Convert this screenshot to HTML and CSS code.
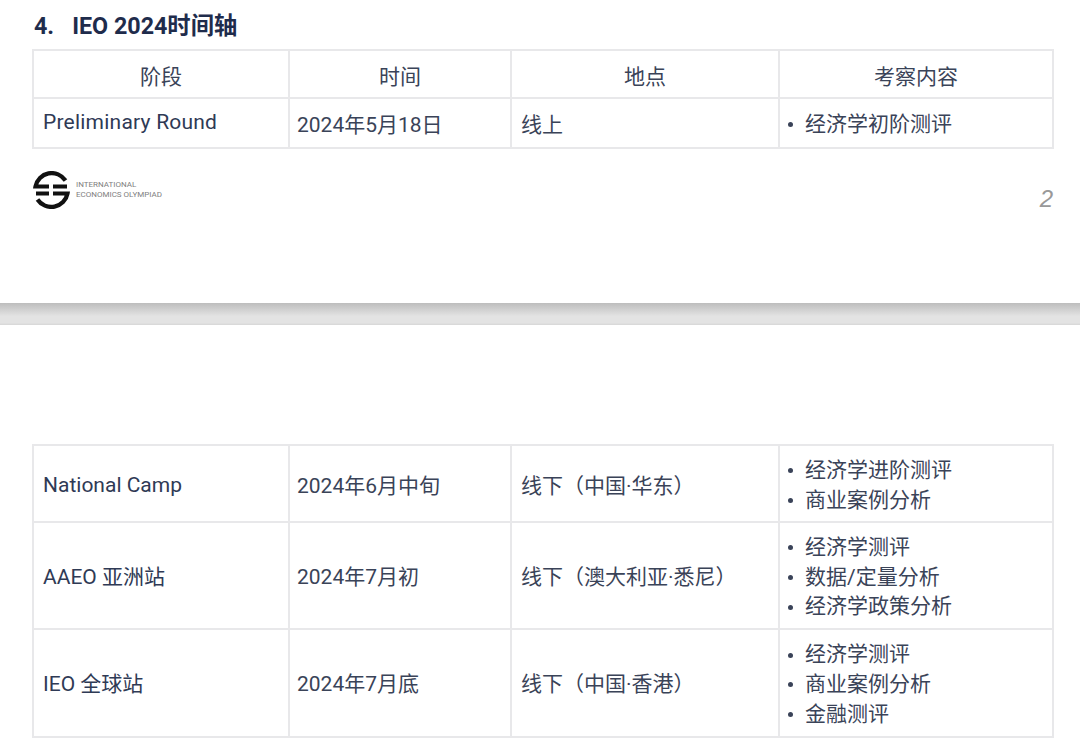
FILE: index.html
```html
<!DOCTYPE html>
<html lang="zh">
<head>
<meta charset="utf-8">
<title>IEO 2024时间轴</title>
<link rel="stylesheet" href="styles.css">
</head>
<body>
<section class="page page-top">
  <h2 class="heading"><span class="heading-num">4.</span><span>IEO 2024时间轴</span></h2>
  <table class="grid">
    <colgroup><col class="c1"><col class="c2"><col class="c3"><col class="c4"></colgroup>
    <tr class="row-head"><th>阶段</th><th>时间</th><th>地点</th><th>考察内容</th></tr>
    <tr class="row-one">
      <td class="name name-first">Preliminary Round</td><td class="date">2024年5月18日</td><td class="place">线上</td>
      <td class="list-cell"><ul class="items"><li>经济学初阶测评</li></ul></td>
    </tr>
  </table>
  <footer class="foot">
    <div class="brand">
      <svg class="logo" width="37" height="38" viewBox="0 0 37 38" aria-hidden="true">
        <path d="M32.5 9.5A16.5 16.5 0 0 0 2.5 15.5H16" fill="none" stroke="#111" stroke-width="4.2"/>
        <path d="M4.5 28.5A16.5 16.5 0 0 0 34.5 22.5H20" fill="none" stroke="#111" stroke-width="4.2"/>
        <path d="M3 22.5H16M20 15.5H34" fill="none" stroke="#111" stroke-width="3.9"/>
      </svg>
      <div class="brand-text">INTERNATIONAL<br>ECONOMICS OLYMPIAD</div>
    </div>
    <div class="page-no">2</div>
  </footer>
</section>
<div class="divider"></div>
<section class="page page-bottom">
  <table class="grid">
    <colgroup><col class="c1"><col class="c2"><col class="c3"><col class="c4"></colgroup>
    <tr class="row-two">
      <td class="name">National Camp</td><td class="date">2024年6月中旬</td><td class="place">线下（中国·华东）</td>
      <td class="list-cell"><ul class="items"><li>经济学进阶测评</li><li>商业案例分析</li></ul></td>
    </tr>
    <tr class="row-three">
      <td class="name">AAEO 亚洲站</td><td class="date">2024年7月初</td><td class="place">线下（澳大利亚·悉尼）</td>
      <td class="list-cell"><ul class="items"><li>经济学测评</li><li>数据/定量分析</li><li>经济学政策分析</li></ul></td>
    </tr>
    <tr class="row-three row-last">
      <td class="name">IEO 全球站</td><td class="date">2024年7月底</td><td class="place">线下（中国·香港）</td>
      <td class="list-cell"><ul class="items"><li>经济学测评</li><li>商业案例分析</li><li>金融测评</li></ul></td>
    </tr>
  </table>
</section>
</body>
</html>
```

FILE: styles.css
```css
* { box-sizing: border-box; }
html, body { margin: 0; padding: 0; background: #fff; }
body {
  width: 1080px;
  height: 747px;
  overflow: hidden;
  font-family: Roboto, "Noto Sans CJK SC", sans-serif;
  color: #3a4358;
  font-size: 21px;
}
.page { padding: 0 27px 0 33px; }
.page-top { height: 303px; padding-top: 11px; }
.page-bottom { height: 422px; padding-top: 119px; }
.heading {
  margin: 0 0 7px;
  height: 31px;
  font-size: 23.3px;
  line-height: 31px;
  font-weight: 700;
  color: #1f2c4c;
  display: flex;
  gap: 18px;
}
.heading-num { padding-left: 1px; }
.grid {
  border-collapse: collapse;
  table-layout: fixed;
  width: 1020px;
  margin-left: -1px;
}
.c1 { width: 256px; }
.c2 { width: 222px; }
.c3 { width: 268px; }
.c4 { width: 274px; }
th, td {
  border: 2px solid #e8e8ea;
  padding: 0 9px;
  font-weight: 400;
  vertical-align: middle;
  text-align: left;
}
th { text-align: center; padding-top: 2px; }
.row-head { height: 48px; }
.row-one { height: 50px; }
.row-two { height: 77px; }
.row-three { height: 107px; }
.row-last { height: 108px; }
.name { color: #2f3a55; padding-bottom: 2px; }
.date { padding: 0 7px 2px; }
.place { padding: 0 9px 2px; }
.row-one .date, .row-one .place, .row-two .date, .row-two .place { padding-bottom: 0; }
.row-two .name { padding-top: 2px; padding-bottom: 0; }
.row-one .name-first { padding-bottom: 3px; letter-spacing: 0.22px; }
.list-cell { padding: 4px 8px 0; }
.items { list-style: none; margin: 0; padding: 0; }
.items li {
  line-height: 29.7px;
  display: flex;
  align-items: center;
  gap: 12px;
}
.items li::before {
  content: "";
  width: 5px;
  height: 5px;
  border-radius: 50%;
  background: #3a4358;
}
.foot {
  display: flex;
  justify-content: space-between;
  align-items: flex-start;
  padding-top: 22px;
}
.brand { display: flex; align-items: center; gap: 6px; }
.logo { display: block; }
.brand-text {
  font-size: 8px;
  line-height: 10px;
  color: #808080;
}
.page-no {
  font-family: "Liberation Sans", sans-serif;
  font-style: italic;
  font-size: 24px;
  line-height: 28px;
  color: #999;
  margin-top: 14px;
}
.divider {
  height: 22px;
  background: linear-gradient(#bdbdbd, #e3e3e3 60%, #e3e3e3 90%, #d6d6d6);
}
```
